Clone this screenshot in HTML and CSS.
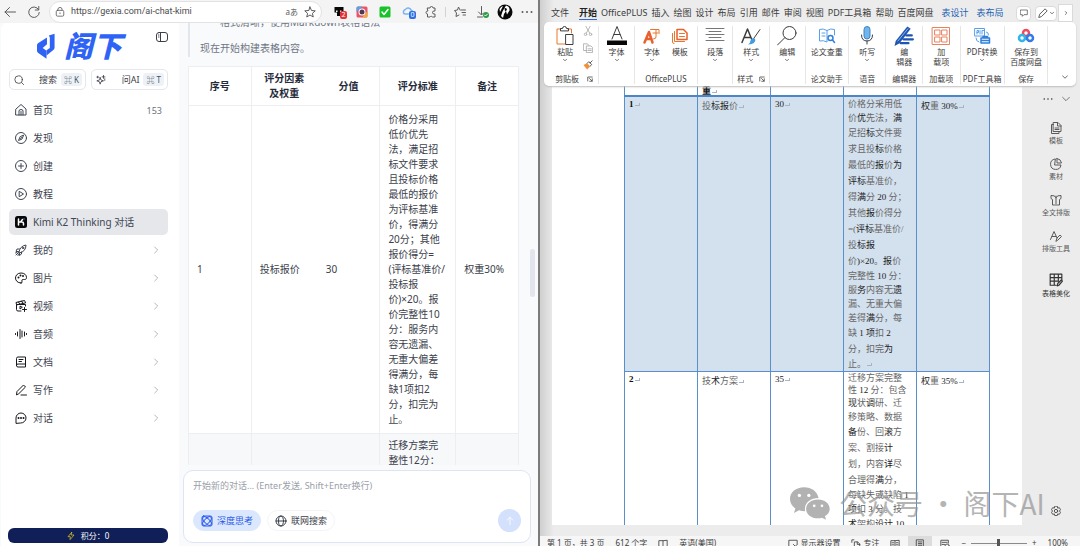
FILE: index.html
```html
<!DOCTYPE html>
<html lang="zh-CN">
<head>
<meta charset="utf-8">
<title>阁下 - Kimi K2 Thinking 对话</title>
<link rel="stylesheet" href="styles.css">
</head>
<body>
<svg class="defs" aria-hidden="true">
  <symbol id="chev" viewBox="0 0 24 24"><path d="m8 3 9 9-9 9"/></symbol>
  <symbol id="down" viewBox="0 0 24 24"><path d="m2 7 10 10L22 7"/></symbol>
  <symbol id="launch" viewBox="0 0 24 24"><path d="M3 20V4h18M10 10l10 10M21 11v10H11"/></symbol>
</svg>

<section class="browser">
  <header class="toolbar">
    <button class="ib" aria-label="后退"><svg class="i12" viewBox="0 0 24 24"><path d="M23 12H2M11 3l-9 9 9 9"/></svg></button>
    <button class="ib reload" aria-label="刷新"><svg class="i12" viewBox="0 0 24 24"><path d="M21 7a10.500 10.500 0 1 0 1.500 6M21.500 1v7h-7"/></svg></button>
    <div class="address">
      <svg class="i10" viewBox="0 0 24 24"><rect x="3" y="8" width="18" height="14" rx="3"/><path d="M7 8V6a5 5 0 0 1 10 0v2M12 14v2"/></svg>
      <input class="url" aria-label="地址" value="https://gexia.com/ai-chat-kimi">
      <span class="read">aあ</span>
      <svg class="i12" viewBox="0 0 24 24"><path d="m12 2 3 7 7.500.700-5.700 5 1.700 7.300L12 18l-6.500 4 1.700-7.300-5.700-5L9 9z"/></svg>
    </div>
    <div class="exts">
      <span class="ext"><svg class="i12" viewBox="0 0 24 24"><path class="ink" d="M3 2h18v11h-5v7H8v-7H3z"/><path class="paper" d="M6 9h3v3H6zm8 0h3v3h-3z"/></svg><i class="badge red">2</i></span>
      <span class="ext"><svg class="i12" viewBox="0 0 24 24"><rect class="p1" x="1" y="1" width="22" height="22" rx="3"/><path class="p2" d="M1 12V4q0-3 3-3h9z"/><path class="p3" d="M12 23h8q3 0 3-3V10z"/><circle class="p4" cx="12" cy="12" r="7"/><circle class="p5" cx="12" cy="12" r="5"/></svg></span>
      <span class="ext"><svg class="i12" viewBox="0 0 24 24"><rect class="ok" x="1" y="1" width="22" height="22" rx="3"/><path class="wline" d="m6 12 4 5 8-10"/></svg></span>
      <span class="ext"><svg class="i12" viewBox="0 0 24 24"><path class="sky" d="M3 13a5 5 0 0 1 4-6 6 6 0 0 1 11 1q4 1 4 5M3 13q0 3 4 3h6"/></svg><i class="badge blue">0</i></span>
      <span class="ext"><svg class="i12" viewBox="0 0 24 24"><path d="M5 4h5a3 3 0 0 1 6 0h4v6h-2a3 3 0 0 0 0 6h2v6h-5a3 3 0 0 0-5 0H5v-6a3 3 0 0 1 0-6z"/></svg></span>
      <span class="bar"></span>
      <span class="ext"><svg class="i12" viewBox="0 0 24 24"><path d="M14 8h9M16 13h7M18 18h5M12 8 9 2 7 8l-6 1 4 5-1 7 6-3"/></svg></span>
      <span class="ext"><svg class="i12" viewBox="0 0 24 24"><path d="M9 1v16M3 12l6 6 4-4M1 22h10"/><circle class="okc" cx="18" cy="18" r="6"/><path class="wline2" d="m15 18 2 2 4-4"/></svg></span>
      <span class="ext avatar"><svg viewBox="0 0 32 32"><circle class="ink" cx="16" cy="16" r="15"/><path class="paper" d="M18 3q8 2 7 10l-5 8-2-7-4 6-2 8-4-4 3-9z"/><path class="paper" d="M5 10q3-5 7-6l-6 12z"/><path class="ink" d="M15 8q5-1 5 4l-4 3z"/></svg></span>
      <span class="ext"><svg class="i12" viewBox="0 0 24 24"><path class="dots" d="M3 12h.01M12 12h.01M21 12h.01"/></svg></span>
    </div>
  </header>

  <div class="site">
    <aside class="side">
      <div class="brand">
        <svg class="mark" viewBox="0 0 40 54"><path d="M21 8v14l-9 8 8 6v17L2 40q-2-2-2-4V24q0-2 2-4z"/><path d="M25 4 37 0v29q0 3-2 5L20 46V35l7-5V8z"/></svg>
        <strong class="wordmark">阁下</strong>
        <button class="ib panel" aria-label="收起侧栏"><svg class="i12" viewBox="0 0 24 24"><rect x="1" y="3" width="22" height="18" rx="5"/><path d="M9 3v18M5 8h1M5 12h1"/></svg></button>
      </div>
      <div class="quick">
        <button><svg class="i10" viewBox="0 0 24 24"><circle cx="11" cy="11" r="9"/><path d="m18 18 5 5"/></svg><span>搜索</span><kbd>⌘ K</kbd></button>
        <button><svg class="i10" viewBox="0 0 24 24"><path d="m10 6 2 6 6 2-6 2-2 6-2-6-6-2 6-2zM18 1v7M14.500 4.500h7M21 9v4M4 3v4M2 5h4"/></svg><span>问AI</span><kbd>⌘ T</kbd></button>
      </div>
      <nav class="menu">
        <a href="#"><svg class="i12" viewBox="0 0 24 24"><path d="M2 10 12 1l10 9v12H2zM8 22v-8q0-3 4-3t4 3v8M12 15v7"/></svg><span>首页</span><em>153</em></a>
        <a href="#"><svg class="i12" viewBox="0 0 24 24"><circle cx="12" cy="12" r="11"/><path d="m17 7-3 7-7 3 3-7zM11 13l2-2"/></svg><span>发现</span></a>
        <a href="#"><svg class="i12" viewBox="0 0 24 24"><circle cx="12" cy="12" r="11"/><path d="M12 7v10M7 12h10"/></svg><span>创建</span></a>
        <a href="#"><svg class="i12" viewBox="0 0 24 24"><circle cx="12" cy="12" r="11"/><path d="m9 7 8 5-8 5z"/></svg><span>教程</span></a>
        <a href="#" class="on"><svg class="i12" viewBox="0 0 24 24"><rect class="ink" x="0" y="0" width="24" height="24" rx="5"/><path class="kline" d="M7 6v12M7 12h7q3 0 3 3v3M11 12l4-5"/><circle class="kdot" cx="18" cy="6" r="1.500"/></svg><span>Kimi K2 Thinking 对话</span></a>
        <a href="#"><svg class="i12" viewBox="0 0 24 24"><path d="M8 16Q10 4 22 2q0 13-13 16zM9 10H4l-2 5h5M13 16v4l-4 3v-5M2 22l5-5M1 18l3-1M6 23l1-3"/><circle cx="16" cy="8" r="1.500"/></svg><span>我的</span><svg class="go"><use href="#chev"/></svg></a>
        <a href="#" class="dk"><svg class="i12" viewBox="0 0 24 24"><path d="M12 22C5 22 1 17 1 12S5 2 12 2s11 4 11 9c0 7-8 2-9 5s2 6-2 6z"/><path class="dots" d="M7 11h.01M11 7h.01M16 8h.01"/></svg><span>图片</span><svg class="go"><use href="#chev"/></svg></a>
        <a href="#" class="dk"><svg class="i12" viewBox="0 0 24 24"><path d="M21 12V9H3v10q0 3 3 3h6M3 9 2 5l17-4 2 4zM7 4l3 5M13 2l3 5M10 13v5l4-3zM19 15v8M15 19h8"/></svg><span>视频</span><svg class="go"><use href="#chev"/></svg></a>
        <a href="#" class="dk"><svg class="i12" viewBox="0 0 24 24"><path d="M1 11v2M5 8v8M10 3v18M14 6v12M19 8v8M23 11v2"/></svg><span>音频</span><svg class="go"><use href="#chev"/></svg></a>
        <a href="#" class="dk"><svg class="i12" viewBox="0 0 24 24"><path d="M3 19V5q0-3 3-3h15v20H6q-3 0-3-3t3-3h15M8 7h8M8 11h5"/></svg><span>文档</span><svg class="go"><use href="#chev"/></svg></a>
        <a href="#" class="dk"><svg class="i12" viewBox="0 0 24 24"><path d="m3 21 1-6L17 2l4 4L8 19zM12 22h11"/></svg><span>写作</span><svg class="go"><use href="#chev"/></svg></a>
        <a href="#" class="dk"><svg class="i12" viewBox="0 0 24 24"><path d="M2 22V12a10 10 0 1 1 10 10z"/><path class="dots" d="M7 12h.01M12 12h.01M17 12h.01"/></svg><span>对话</span><svg class="go"><use href="#chev"/></svg></a>
      </nav>
      <button class="points"><svg class="bolt" viewBox="0 0 24 24"><path d="M14 1 3 14h7l-1 9 12-14h-8z"/></svg>积分：0</button>
    </aside>

    <main class="chat">
      <div class="scroll">
        <blockquote><p class="li">格式清晰，使用Markdown表格语法</p><p>现在开始构建表格内容。</p></blockquote>
        <table class="score">
          <colgroup><col class="c1"><col class="c2"><col class="c1"><col class="c3"><col class="c1"></colgroup>
          <thead><tr><th>序号</th><th>评分因素<br>及权重</th><th>分值</th><th>评分标准</th><th>备注</th></tr></thead>
          <tbody>
            <tr class="r1"><td>1</td><td>投标报价</td><td>30</td><td>价格分采用<br>低价优先<br>法，满足招<br>标文件要求<br>且投标价格<br>最低的报价<br>为评标基准<br>价，得满分<br>20分；其他<br>报价得分=<br>(评标基准价/<br>投标报<br>价)×20。报<br>价完整性10<br>分：服务内<br>容无遗漏、<br>无重大偏差<br>得满分，每<br>缺1项扣2<br>分，扣完为<br>止。</td><td>权重30%</td></tr>
            <tr class="r2"><td></td><td></td><td></td><td>迁移方案完<br>整性12分：</td><td></td></tr>
          </tbody>
        </table>
        <i class="thumb"></i>
      </div>
      <form class="composer">
        <textarea aria-label="对话输入" rows="1" placeholder="开始新的对话... (Enter发送, Shift+Enter换行)"></textarea>
        <div class="acts">
          <button type="button" class="chip think"><svg class="i12" viewBox="0 0 24 24"><rect x="2" y="2" width="20" height="20" rx="3"/><ellipse cx="12" cy="12" rx="11" ry="5" transform="rotate(45 12 12)"/><ellipse cx="12" cy="12" rx="11" ry="5" transform="rotate(-45 12 12)"/></svg>深度思考</button>
          <button type="button" class="chip"><svg class="i12" viewBox="0 0 24 24"><circle cx="12" cy="12" r="10"/><ellipse cx="12" cy="12" rx="5" ry="10"/><path d="M2 12h20"/></svg>联网搜索</button>
          <button type="button" class="send" aria-label="发送"><svg class="i10" viewBox="0 0 24 24"><path d="M12 21V3M5 10l7-7 7 7"/></svg></button>
        </div>
      </form>
    </main>
  </div>
</section>

<section class="word">
  <nav class="tabs">
    <a href="#" class="file">文件</a><a href="#" class="cur">开始</a><a href="#">OfficePLUS</a><a href="#">插入</a><a href="#">绘图</a><a href="#">设计</a><a href="#">布局</a><a href="#">引用</a><a href="#">邮件</a><a href="#">审阅</a><a href="#">视图</a><a href="#">PDF工具箱</a><a href="#">帮助</a><a href="#">百度网盘</a><a href="#" class="ctx">表设计</a><a href="#" class="ctx">表布局</a>
    <span class="tools">
      <button aria-label="批注"><svg class="i8" viewBox="0 0 24 24"><path d="M2 3h20v14H12l-5 5v-5H2z"/></svg></button>
      <button class="wide" aria-label="编辑模式"><svg class="i10" viewBox="0 0 24 24"><path d="m2 22 2-7L17 2l5 5L9 20z"/></svg><svg class="i4"><use href="#down"/></svg></button>
      <button class="sq" aria-label="更多"><svg class="i4"><use href="#chev"/></svg></button>
    </span>
  </nav>

  <div class="ribbon">
    <div class="grp g55">
      <div class="cmds">
        <button class="cmd"><svg class="big" viewBox="0 0 36 40"><path class="or" d="M9 6H2v30h16M24 6h7v8"/><path d="M9 9V5h4q0-4 4-4t4 4h4v4z"/><rect x="20" y="17" width="14" height="20"/></svg><span>粘贴</span><svg class="i4"><use href="#down"/></svg></button>
        <div class="mini">
          <svg class="i10 dim" viewBox="0 0 24 24"><path d="m7 1 9 16M17 1 8 17"/><circle cx="6" cy="20" r="3"/><circle cx="18" cy="20" r="3"/></svg>
          <svg class="i10 dim" viewBox="0 0 24 24"><path d="M9 18H1V2h10l3 4"/><path d="M9 7h10l4 4v12H9zM12 14h8M12 18h8"/></svg>
          <svg class="i10" viewBox="0 0 24 24"><path class="orf" d="m1 12 9-4 7 7-7 8z"/><path d="m10 8 4-4 7 7-4 4M17 7l5-5"/></svg>
        </div>
      </div>
      <footer>剪贴板<svg class="i6"><use href="#launch"/></svg></footer>
    </div>
    <div class="grp g35"><div class="cmds"><button class="cmd"><svg class="big" viewBox="0 0 40 40"><path d="M10 26 20 1l10 25M14 17h12"/><path class="ink" d="M0 29h40v9H0z"/></svg><span>字体</span><svg class="i4"><use href="#down"/></svg></button></div><footer></footer></div>
    <div class="grp g63">
      <div class="cmds">
        <button class="cmd"><svg class="big" viewBox="0 0 40 40"><path class="orb" d="M5 33 14 12l7 21M8 26h11"/><path class="or" d="M17 7h17v5M22 14h13M28 7v15q0 4-5 4"/></svg><span>字体</span><svg class="i4"><use href="#down"/></svg></button>
        <button class="cmd"><svg class="big" viewBox="0 0 40 40"><path class="orw" d="M14 7h13l7 7v13H14z"/><path class="or" d="M19 15h10M19 21h10M9 11v20h20M5 15v17q0 3 3 3"/></svg><span>模板</span></button>
      </div>
      <footer>OfficePLUS</footer>
    </div>
    <div class="grp g35"><div class="cmds"><button class="cmd"><svg class="big" viewBox="0 0 40 40"><path class="lines" d="M2 5h36M8 11h24M2 17h36M8 23h24M2 29h36"/></svg><span>段落</span><svg class="i4"><use href="#down"/></svg></button></div><footer></footer></div>
    <div class="grp g36"><div class="cmds"><button class="cmd"><svg class="big" viewBox="0 0 40 40"><path class="thick" d="M2 33 13 6l11 27M6 23h14"/><path d="M38 7 24 27"/><path class="blf" d="M25 24q5 1 3 7-4 6-14 6 5-3 5-8 2-5 6-5z"/></svg><span>样式</span><svg class="i4"><use href="#down"/></svg></button></div><footer>样式<svg class="i6"><use href="#launch"/></svg></footer></div>
    <div class="grp g35"><div class="cmds"><button class="cmd"><svg class="big" viewBox="0 0 40 40"><circle cx="25" cy="14" r="13"/><path d="M16 23 1 38"/></svg><span>编辑</span><svg class="i4"><use href="#down"/></svg></button></div><footer></footer></div>
    <div class="grp g43"><div class="cmds"><button class="cmd"><svg class="big" viewBox="0 0 40 40"><path class="bl" d="M20 9Q12 4 5 7v23q8-2 15 2V9q7-5 15-2v11M10 14h6M10 20h6"/><circle class="bl2" cx="27" cy="24" r="5"/><path class="bl2" d="m31 28 4 5"/></svg><span>论文查重</span></button></div><footer>论文助手</footer></div>
    <div class="grp g37"><div class="cmds"><button class="cmd"><svg class="big" viewBox="0 0 40 40"><rect class="mic" x="14" y="1" width="12" height="25" rx="6"/><path d="M9 18q0 12 11 12t11-12M20 30v6"/></svg><span>听写</span><svg class="i4"><use href="#down"/></svg></button></div><footer>语音</footer></div>
    <div class="grp g36"><div class="cmds"><button class="cmd"><svg class="big" viewBox="0 0 36 36"><path class="nv" d="M3 27 24 1l6 4L10 31l-9 5z"/><path class="nvl" d="M22 17h10M17 24h17M12 31h14"/><path class="wl" d="m7 27 18-22"/></svg><span>编<br>辑器</span></button></div><footer>编辑器</footer></div>
    <div class="grp g37"><div class="cmds"><button class="cmd"><svg class="big" viewBox="0 0 40 40"><path class="sal" d="M3 3h34v34H3zM8 8h10v10H8zM22 8h10v10H22zM8 22h10v10H8zM22 22h10v10H22z"/></svg><span>加<br>载项</span></button></div><footer>加载项</footer></div>
    <div class="grp g44"><div class="cmds"><button class="cmd"><svg class="big" viewBox="0 0 40 40"><path class="bl" d="M6 5h19v15H6zM10 16v-7h3v4h-3M16 9v7M20 16V9h3M29 12q4 0 4 6M8 24q0 7 6 8"/><path class="bl2" d="M18 24h17v10H18zM22 24v-3h9v3M18 29h17"/></svg><span>PDF转换</span><svg class="i4"><use href="#down"/></svg></button></div><footer>PDF工具箱</footer></div>
    <div class="grp g43"><div class="cmds"><button class="cmd"><svg class="big" viewBox="0 0 40 40"><circle class="rd" cx="20" cy="14" r="6"/><circle class="cy" cx="12" cy="24" r="6"/><circle class="bl3" cx="28" cy="24" r="6"/></svg><span>保存到<br>百度网盘</span></button></div><footer>保存</footer></div>
    <button class="fold" aria-label="折叠功能区"><svg class="i6"><use href="#down"/></svg></button>
  </div>

  <div class="desk">
    <article class="page">
      <table class="doc">
        <tbody>
          <tr class="top"><td></td><td><b>重</b><u></u></td><td></td><td></td><td></td></tr>
          <tr class="sel"><td><b>1</b><u></u></td><td>投<s>标报</s>价<u></u></td><td><s>30</s><u></u></td><td>
            <p>价格分采用低</p><p>价<s>优</s>先法，<s>满</s></p><p class="t">足招<s>标</s>文件要</p><p class="t">求且投<s>标</s>价格</p><p class="t">最低的<s>报</s>价<s>为</s></p><p class="t"><s>评标</s>基准价，</p><p class="t">得<s>满</s>分 <s>20</s> 分；</p><p class="t">其他<s>报</s>价得分</p><p class="t">=(<s>评标</s>基准价/</p><p class="t">投<s>标报</s></p><p class="t">价<s>)×20</s>。<s>报</s>价</p><p>完整性 <s>10</s> 分：</p><p>服<s>务</s>内容无<s>遗</s></p><p>漏、无重大偏</p><p>差得<s>满</s>分，每</p><p class="t">缺 <s>1 项</s>扣 <s>2</s></p><p class="t">分，扣完<s>为</s></p><p>止。<u></u></p></td><td><s>权</s>重 <s>30%</s><u></u></td></tr>
          <tr><td><b>2</b><u></u></td><td>技<s>术</s>方案<u></u></td><td><s>35</s><u></u></td><td>
            <p class="n">迁移方案完整</p><p class="n">性 <s>12</s> 分：包含</p><p><s>现</s>状<s>调</s>研、迁</p><p>移策略、数据</p><p class="t"><s>备</s>份、回<s>滚</s>方</p><p class="t">案、割接<s>计</s></p><p class="t">划，内容<s>详</s>尽</p><p class="t">合理得<s>满</s>分，</p><p>每缺失或缺陷 <s>1</s></p><p><s>项</s>扣 <s>3</s> 分。技</p><p class="t"><s>术</s>架构<s>设计 10</s></p></td><td><s>权</s>重 <s>35%</s><u></u></td></tr>
        </tbody>
      </table>
    </article>
    <aside class="rail">
      <div class="railtop"><svg class="i10" viewBox="0 0 24 24"><path class="dots" d="M3 12h.01M12 12h.01M21 12h.01"/></svg><svg class="i8"><use href="#down"/></svg></div>
      <button><svg class="i12" viewBox="0 0 24 24"><path d="M7 1h9l6 6v12H7zM15 1v7h7M7 5H3v18h15v-4M10 12h8M10 15h8"/></svg>模板</button>
      <button><svg class="i12" viewBox="0 0 24 24"><path d="M10 2a10.500 10.500 0 1 0 12 12H10zM14 1v9h9q-1-8-9-9z"/></svg>素材</button>
      <button><svg class="i12" viewBox="0 0 24 24"><path d="M12 4v19M12 7Q9 2 2 3v6l3 2v11h4M12 7q3-5 10-4v6l-3 2v11h-4"/></svg>全文排版</button>
      <button><svg class="i12" viewBox="0 0 24 24"><path d="m1 19 7-16 6 13M4 13h8M12 22l2-6 6-6 3 3-7 7z"/></svg>排版工具</button>
      <button class="last"><svg class="i14" viewBox="0 0 24 24"><path d="M22 12V2H2v19h10M2 8h20M2 14h14M9 2v19M16 2v12M14 22l1-4 6-6 2 2-6 7z"/></svg>表格美化</button>
      <svg class="i10 gear" viewBox="0 0 24 24"><path d="m9 1-1 4-4-1-3 5 3 3-3 3 3 5 4-1 1 4h6l1-4 4 1 3-5-3-3 3-3-3-5-4 1-1-4z"/><circle cx="12" cy="12" r="4"/></svg>
    </aside>
    <div class="mark-over"><svg viewBox="0 0 120 98"><path d="M44 1C20 1 2 16 2 36c0 12 6 21 16 28l-4 13 15-8q7 3 18 3C43 48 62 33 87 33 83 13 66 1 44 1z"/><path d="M85 37c-20 0-35 12-35 28s15 28 35 28q7 0 12-2l12 6-3-11c9-5 14-13 14-21 0-16-15-28-35-28z"/><g class="eye"><circle cx="30" cy="25" r="5"/><circle cx="58" cy="25" r="5"/><circle cx="74" cy="56" r="4"/><circle cx="97" cy="56" r="4"/></g></svg><span>公众号 · 阁下AI</span></div>
  </div>

  <footer class="status">
    <span>第 1 页，共 3 页</span><span>612 个字</span><svg class="i10" viewBox="0 0 24 24"><path d="M12 4H2v17h7l3 2 3-2h7V4zM12 4v18"/></svg><span>英语(美国)</span>
    <span class="push"><svg class="i10" viewBox="0 0 24 24"><path d="M9 20H2V3h20v9M6 23h8M13 13l9 9M22 13l-9 9"/></svg>显示器设置</span>
    <span><svg class="i10" viewBox="0 0 24 24"><path d="M2 8V2h5M8 22V7h8l5 5v10M15 7v6h6"/></svg>专注</span>
    <svg class="i10 v1" viewBox="0 0 24 24"><path d="M12 4H2v17h20V4zM12 4v17M5 9h4M5 14h4M15 9h4M15 14h4"/></svg>
    <span class="view"><svg class="i10" viewBox="0 0 24 24"><path d="M4 2h16v21H4zM8 7h8M8 11h8M8 15h8M8 19h8"/></svg></span>
    <svg class="i10" viewBox="0 0 24 24"><path d="M20 10V3H2v18h8M5 8h12M5 13h6"/><circle cx="17" cy="17" r="5"/></svg>
    <span class="zoom">−<input type="range" min="0" max="200" value="98" aria-label="缩放">+</span><span>100%</span>
  </footer>
</section>
</body>
</html>
```
FILE: styles.css
```css
* { box-sizing: border-box; }
body {
  margin: 0; height: 100vh; overflow: hidden; display: flex; background: #e9e9e9;
  font-family: "Noto Sans", "Noto Sans CJK SC", sans-serif; font-size: 10px; line-height: 15px; color: #3c414b;
}
button, input, textarea { font: inherit; color: inherit; border: 0; padding: 0; background: none; margin: 0; }
a { color: inherit; text-decoration: none; }
p, blockquote { margin: 0; }
svg { fill: none; stroke: currentColor; stroke-width: 2; stroke-linecap: round; stroke-linejoin: round; flex: none; display: block; }
.defs { position: absolute; width: 0; height: 0; }
.i4 { width: 4px; height: 4px; stroke-width: 4; }
.i6 { width: 6px; height: 6px; stroke-width: 3; }
.i8 { width: 8px; height: 8px; }
.i10 { width: 10px; height: 10px; }
.i12 { width: 12px; height: 12px; }
.i14 { width: 14px; height: 14px; }
.ink { fill: #080808; stroke: none; }
.paper { fill: #fff; stroke: none; }
.dots { stroke-width: 4; }

/* browser window */
.browser { flex: 539 1 0; min-width: 0; display: flex; flex-direction: column; background: #f9fafc; border-right: 2px solid #7b7b7b; }
.toolbar { flex: none; height: 23px; padding: 0 4px; display: flex; align-items: center; background: #f4f4f5; color: #5c5c5c; }
.ib { display: flex; }
.reload { margin-left: 12px; }
.address { flex: 1; height: 22px; margin-left: 9px; padding: 0 5px; display: flex; align-items: center; gap: 6px; background: #fff; border: 1px solid #e3e3e4; border-radius: 11px; }
.url { flex: 1; min-width: 0; font-family: Roboto, sans-serif; font-size: 9px; color: #4c4c4c; }
.read { font-size: 8px; }
.exts { display: flex; align-items: center; gap: 11px; margin-left: 11px; padding-right: 1px; }
.ext { position: relative; }
.avatar svg { width: 16px; height: 16px; }
.avatar { margin: 0 -3px; }
.bar { width: 1px; height: 10px; background: #d3d3d3; margin: 0 -3px; }
.badge { position: absolute; left: 7px; top: 5px; width: 7px; height: 8px; border-radius: 2px; color: #fff; font: 7px/8px "Noto Sans", sans-serif; text-align: center; }
.red { background: #e43338; }
.blue { background: #2b70e5; }
.p1 { fill: #e9546b; stroke: none; }
.p2 { fill: #53a6e8; stroke: none; }
.p3 { fill: #f2a93b; stroke: none; }
.p4 { fill: #fff; stroke: none; }
.p5 { fill: #4a3a55; stroke: none; }
.ok { fill: #18c22b; stroke: none; }
.okc { fill: #2c9b41; stroke: none; }
.wline { stroke: #fff; stroke-width: 3; }
.wline2 { stroke: #fff; }
.sky { stroke: #78b2f0; stroke-width: 3; }

.site { flex: 1; min-height: 0; display: flex; }
.side { flex: none; width: 178px; padding: 7px 11px 3px 7px; display: flex; flex-direction: column; background: #fff; border-radius: 6px 0 0 0; margin-left: 1px; }
.brand { display: flex; align-items: center; height: 33px; padding-left: 29px; }
.mark { width: 19px; height: 27px; fill: #2f63f6; stroke: none; }
.wordmark { margin-left: 8px; font: italic 900 29px/28px "Noto Sans CJK SC", sans-serif; color: #2f63f6; align-self: flex-start; }
.panel { align-self: flex-start; margin: 1px 0 0 auto; color: #3c3f45; }
.quick { display: flex; gap: 5px; margin: 6px 0 7px 1px; }
.quick button { flex: 1; height: 21px; padding: 0 3px 0 4px; display: flex; align-items: center; justify-content: space-between; border: 1px solid #e4e7eb; border-radius: 5px; font-size: 9px; }
.quick span { margin-left: auto; margin-right: 4px; }
.quick kbd { background: #eef2f7; border-radius: 3px; padding: 0 3px; font: 8px/13px "Noto Sans", "Noto Sans CJK SC", "DejaVu Sans", sans-serif; color: #44526a; }
.menu { display: flex; flex-direction: column; gap: 2px; margin-left: 1px; }
.menu a { display: flex; align-items: center; gap: 6px; height: 26px; padding: 0 6px; border-radius: 5px; color: #3f4652; }
.menu em { margin-left: auto; font-style: normal; font-size: 9px; color: #6b7280; }
.menu .on { background: #e5e7eb; }
.menu .dk svg:first-child { color: #16181d; }
.kline { stroke: #fff; stroke-width: 3; }
.kdot { fill: #3b82f6; stroke: none; }
.menu .go { width: 8px; height: 8px; margin-left: auto; margin-right: 2px; color: #8b929d; }
.points { margin-top: auto; height: 15px; display: flex; align-items: center; justify-content: center; gap: 6px; border-radius: 6px; background: #101f57; color: #fff; font-size: 8px; }
.bolt { width: 8px; height: 8px; color: #f3d323; }

.chat { flex: 1; min-width: 0; display: flex; flex-direction: column; padding: 0 7px 3px 4px; }
.scroll { flex: 1; min-height: 0; overflow: hidden; position: relative; padding: 0 16px 0 5px; margin: 0 -4px 5px 0; }
.thumb { position: absolute; right: 0; top: 226px; width: 5px; height: 48px; border-radius: 3px; background: #e3e5ee; }
blockquote { border-left: 2px solid #e3e7ec; padding: 0 0 1px 10px; color: #6e7683; margin-top: -8px; }
blockquote p + p { margin-top: 11px; }
.li { padding-left: 20px; }
.score { width: 100%; margin-top: 9px; border-collapse: collapse; table-layout: fixed; background: #fff; border: 1px solid #d5d9df; }
.c1 { width: 19%; } .c2 { width: 20%; } .c3 { width: 23%; }
.score th { height: 39px; padding: 0; font-weight: 700; color: #262b3a; border: 1px solid #eceef1; }
.score td { padding: 0 0 0 8px; white-space: nowrap; border: 1px solid #eceef1; }
.score tr > :nth-child(4) { border-left-color: #d5d9df; }
.score tr > :nth-child(2) { border-right-color: transparent; }
.score tr > :nth-child(3) { border-left-color: transparent; }
.r1 td { height: 328px; }
.r2 { background: #f7f8fa; }
.score .r2 td { height: 60px; padding-top: 4px; vertical-align: top; }
.composer { flex: none; height: 73px; padding: 7px 9px 10px; display: flex; flex-direction: column; background: #fff; border: 1px solid #dde5f2; border-radius: 10px; }
.composer textarea { width: 100%; height: 15px; resize: none; overflow: hidden; font-size: 9px; }
.composer textarea::placeholder { color: #9aa0aa; }
.acts { margin-top: auto; display: flex; align-items: center; gap: 6px; }
.chip { height: 21px; padding: 0 7px; display: flex; align-items: center; gap: 4px; border: 1px solid #f3f4f6; border-radius: 11px; font-size: 9px; }
.think { background: #dbe7fd; border-color: #dbe7fd; color: #2a5bea; }
.send { margin-left: auto; width: 23px; height: 23px; border-radius: 50%; background: #d3e1fc; color: #fff; display: flex; align-items: center; justify-content: center; }

/* word processor */
.word { flex: 541 1 0; min-width: 0; display: flex; flex-direction: column; background: linear-gradient(90deg, #cfcfcf, #ececec 14px); color: #3c3c3c; }
.tabs { flex: none; height: 22px; padding: 4px 7px 0 11px; display: flex; align-items: center; gap: 4px; font-size: 9px; white-space: nowrap; }
.tabs a { line-height: 13px; border-bottom: 1px solid transparent; }
.file { margin-right: 6px; }
.tabs .cur { font-weight: 700; color: #222; border-color: #2b6cd4; }
.tabs .ctx { color: #2563b4; margin-left: 4px; }
.tools { margin-left: auto; display: flex; gap: 4px; align-items: center; }
.tools button { width: 15px; height: 15px; display: flex; align-items: center; justify-content: center; gap: 2px; background: #fff; border: 1px solid #dadada; border-radius: 4px; }
.tools .wide { width: 22px; }
.tools .sq { height: 18px; border-radius: 0; margin-left: -3px; }
.ribbon { flex: none; height: 64px; margin: 0 4px; display: flex; padding: 4px 0 2px; background: #fff; border-radius: 5px; box-shadow: 0 1px 2px #bdbdbd; font-size: 8px; line-height: 10px; position: relative; z-index: 1; }
.grp { display: flex; flex-direction: column; min-width: 0; border-right: 1px solid #e6e6e6; white-space: nowrap; }
.g55 { flex: 55 1 0; } .g35 { flex: 35 1 0; } .g63 { flex: 63 1 0; } .g36 { flex: 36 1 0; }
.g43 { flex: 43 1 0; } .g37 { flex: 37 1 0; } .g44 { flex: 44 1 0; }
.cmds { flex: 1; display: flex; justify-content: center; gap: 8px; }
.g55 .cmds, .g55 footer { padding-left: 6px; }
.cmd { display: flex; flex-direction: column; align-items: center; justify-content: flex-start; text-align: center; gap: 1px; line-height: 10px; }
.big { width: 20px; height: 20px; }
.mini { display: flex; flex-direction: column; gap: 7px; }
.dim { color: #aaa; }
.grp footer { height: 10px; display: flex; align-items: center; justify-content: center; gap: 8px; }
.g36 footer { gap: 6px; }
.fold { flex: 28 1 0; display: flex; align-items: flex-end; justify-content: flex-end; }
.fold svg { margin: 0 8px 4px 0; }
.lines { stroke: #777; }
.or { stroke: #e9762b; } .orb { stroke: #e8602c; stroke-width: 5; } .orw { stroke: #e8602c; stroke-width: 3; }
.orf { fill: #f0913a; stroke: none; }
.thick { stroke-width: 3; }
.blf { fill: #459be0; stroke: none; }
.bl { stroke: #59a0ea; } .bl2 { stroke: #2f7fdc; stroke-width: 3; }
.mic { fill: #73b4ea; stroke: #3c84c9; }
.nv { fill: #1d55b5; stroke: none; } .nvl { stroke: #1d55b5; stroke-width: 4; } .wl { stroke: #fff; stroke-width: 1; }
.sal { stroke: #e88260; }
.rd { stroke: #ee4c5c; stroke-width: 5; } .cy { stroke: #2cb7e8; stroke-width: 5; } .bl3 { stroke: #3479e8; stroke-width: 5; }

.desk { flex: 1; min-height: 0; display: flex; position: relative; padding-left: 12px; margin-bottom: 11px; }
.page { flex: 366 1 0; min-width: 0; overflow: hidden; background: #fff; padding: 0 32px 0 72px; }
.doc { width: 100%; table-layout: fixed; border-collapse: collapse; font: 9px/14px "Liberation Serif", "Noto Sans CJK SC", serif; color: #666; }
.doc td { border: 1px solid #5b8fcb; border-top: 0; padding: 0 0 0 4px; vertical-align: top; white-space: nowrap; }
.doc td + td { padding-top: 2px; }
.doc td:nth-child(3), .doc td:nth-child(4) { padding-top: 0; }
.doc b { color: #111; }
.doc s { text-decoration: none; color: #222; }
.doc u { display: inline-block; width: 5px; height: 3px; border: 1px solid #a9b4c2; border-width: 0 1px 1px 0; margin-left: 1px; vertical-align: 1px; }
.top td { height: 10px; line-height: 6px; border-bottom: 2px solid #4d86c8; }
.sel td { background: #d3e0ee; }
.doc .t { line-height: 16px; }
.doc .n { line-height: 12px; }
.rail { flex: 48 1 0; padding: 8px 0 0 10px; display: flex; flex-direction: column; align-items: center; }
.rail button { display: flex; flex-direction: column; align-items: center; gap: 2px; height: 36px; font-size: 7px; line-height: 9px; white-space: nowrap; color: #5a5a5a; }
.railtop { display: flex; gap: 9px; align-items: center; height: 10px; margin-bottom: 18px; }
.rail .last { margin-top: 7px; color: #333; }
.gear { margin-top: auto; margin-bottom: 9px; }
.mark-over { position: absolute; left: 249px; bottom: 2px; display: flex; align-items: center; gap: 9px; opacity: .68; color: #929292; font: 28px/40px "Noto Sans CJK SC", sans-serif; white-space: nowrap; }
.mark-over svg { width: 41px; height: 33px; fill: #8f8f8f; stroke: none; }
.eye { fill: #fff; }
.status { flex: none; height: 10px; padding: 0 12px 0 7px; display: flex; align-items: flex-start; gap: 11px; font-size: 8px; line-height: 14px; white-space: nowrap; background: #f6f6f6; overflow: hidden; }
.status span { display: flex; gap: 2px; }
.status svg { margin-top: 3px; }
.push { margin-left: auto; }
.status .view { background: #dcdcdc; padding: 0 7px; margin: 0 -3px; }
.zoom input { width: 56px; height: 14px; margin: 0 3px; appearance: none; }
.zoom input::-webkit-slider-runnable-track { height: 1px; background: #8a8a8a; }
.zoom input::-webkit-slider-thumb { appearance: none; width: 3px; height: 9px; margin-top: -4px; background: #555; }
```
